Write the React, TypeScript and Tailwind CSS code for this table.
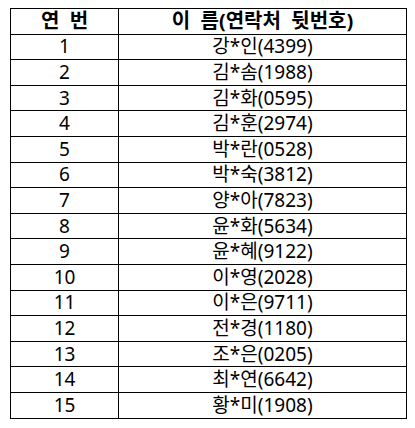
const rows = [
  '강*인(4399)',
  '김*솜(1988)',
  '김*화(0595)',
  '김*훈(2974)',
  '박*란(0528)',
  '박*숙(3812)',
  '양*아(7823)',
  '윤*화(5634)',
  '윤*혜(9122)',
  '이*영(2028)',
  '이*은(9711)',
  '전*경(1180)',
  '조*은(0205)',
  '최*연(6642)',
  '황*미(1908)',
]

const font = { fontFamily: '"Noto Sans", "Noto Sans CJK KR", sans-serif' }

export default function App() {
  return (
    <div className="h-[428px] w-[415px] bg-white pl-[10px] pt-[8px]" style={font}>
      <table className="w-[397px] border-collapse text-[19px] leading-none text-black">
        <thead>
          <tr className="h-[25.6px]">
            <th className="w-[108px] whitespace-pre border border-black p-0 text-center text-[20px] font-bold">
              연  번
            </th>
            <th className="whitespace-pre border border-black p-0 text-center text-[20px] font-bold">
              이  름(연락처  뒷번호)
            </th>
          </tr>
        </thead>
        <tbody>
          {rows.map((name, i) => (
            <tr key={i} className="h-[25.6px]">
              <td className="border border-black p-0 text-center">{i + 1}</td>
              <td className="border border-black p-0 text-center">{name}</td>
            </tr>
          ))}
        </tbody>
      </table>
    </div>
  )
}
